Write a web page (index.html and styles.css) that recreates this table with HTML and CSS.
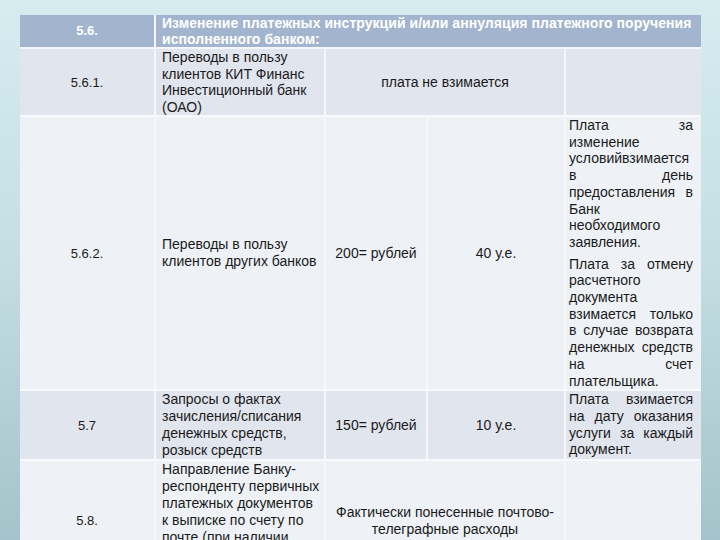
FILE: index.html
```html
<!DOCTYPE html>
<html lang="ru">
<head>
<meta charset="utf-8">
<title>Тарифы</title>
<link rel="stylesheet" href="styles.css">
</head>
<body>
<div class="page">
  <table class="tariffs">
    <colgroup>
      <col class="c-num">
      <col class="c-name">
      <col class="c-rub">
      <col class="c-usd">
      <col class="c-note">
    </colgroup>
    <tr class="head">
      <td class="num">5.6.</td>
      <td class="title" colspan="4">Изменение платежных инструкций и/или аннуляция платежного поручения<br>исполненного банком:</td>
    </tr>
    <tr class="dark r1">
      <td class="num">5.6.1.</td>
      <td class="name">Переводы в пользу<br>клиентов КИТ Финанс<br>Инвестиционный банк<br>(ОАО)</td>
      <td class="center" colspan="2">плата не взимается</td>
      <td class="note"></td>
    </tr>
    <tr class="light">
      <td class="num">5.6.2.</td>
      <td class="name">Переводы в пользу<br>клиентов других банков</td>
      <td class="center">200= рублей</td>
      <td class="center">40 у.е.</td>
      <td class="note">
        <p>Плата за изменение условийвзимается в день предоставления в Банк необходимого заявления.</p>
        <p class="gap">Плата за отмену расчетного документа взимается только в случае возврата денежных средств на счет плательщика.</p>
      </td>
    </tr>
    <tr class="dark">
      <td class="num">5.7</td>
      <td class="name">Запросы о фактах<br>зачисления/списания<br>денежных средств,<br>розыск средств</td>
      <td class="center">150= рублей</td>
      <td class="center">10 у.е.</td>
      <td class="note"><p>Плата взимается на дату оказания услуги за каждый документ.</p></td>
    </tr>
    <tr class="light">
      <td class="num">5.8.</td>
      <td class="name">Направление Банку-<br>респонденту первичных<br>платежных документов<br>к выписке по счету по<br>почте (при наличии<br>технической<br>возможности)</td>
      <td class="center" colspan="2">Фактически понесенные почтово-<br>телеграфные расходы</td>
      <td class="note"></td>
    </tr>
  </table>
</div>
</body>
</html>
```

FILE: styles.css
```css
html, body {
  margin: 0;
  padding: 0;
}
body {
  width: 720px;
  height: 540px;
  overflow: hidden;
  background: linear-gradient(to bottom, #d6edf0 0%, #c3dde2 50%, #a4c3ca 100%);
  font-family: "Liberation Sans", Arial, sans-serif;
  color: #1a1a1a;
}
.page {
  padding: 15px 19px 0 20px;
}
.tariffs {
  width: 681px;
  table-layout: fixed;
  border-collapse: collapse;
  font-size: 14px;
}
.c-num { width: 135px; }
.c-name { width: 170px; }
.c-rub { width: 102px; }
.c-usd { width: 138px; }
.c-note { width: 136px; }

.tariffs td {
  padding: 0;
  vertical-align: middle;
  border-right: 2px solid #f6f8fb;
  border-bottom: 2px solid #f7f9fc;
  line-height: 17px;
}
.tariffs td:last-child {
  border-right: none;
}
.head td {
  background: #a3b5ce;
  color: #ffffff;
  font-weight: bold;
  font-size: 13px;
  line-height: 16px;
  height: 32px;
  border-bottom: 2px solid #f4f7fa;
}
.head .title {
  padding-left: 6px;
  white-space: nowrap;
  vertical-align: top;
  font-size: 14px;
  letter-spacing: 0.05px;
}
.dark td { background: #e1e5ee; }
.light td { background: #eef2f7; }
.head td.num { background: #a3b5ce; }

.num {
  text-align: center;
  font-size: 13px;
}
.name {
  padding: 0 3px 0 6px !important;
  white-space: nowrap;
}
.r1 .name {
  line-height: 16.5px;
}
.center {
  text-align: center;
}
.note {
  padding: 0 8px 0 3px !important;
  text-align: justify;
  vertical-align: top !important;
}
.note p {
  margin: 0;
  line-height: 16.7px;
}
.note p.gap {
  margin-top: 5px;
}
```
